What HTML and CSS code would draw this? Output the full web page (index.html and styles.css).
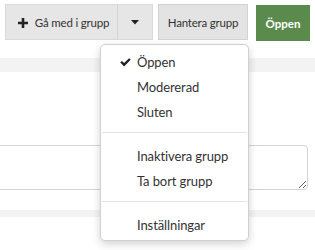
FILE: index.html
```html
<!DOCTYPE html>
<html lang="sv">
<head>
    <meta charset="UTF-8">
    <meta name="viewport" content="width=device-width, initial-scale=1.0">
    <title>Grupp</title>
    <link rel="stylesheet" href="styles.css">
</head>
<body>
    <div class="toolbar">
        <div class="btn-group">
            <button class="btn btn-join">
                <svg class="plus" width="10" height="10" viewBox="0 0 10 10"><path d="M3.7 0h2.6v3.7H10v2.6H6.3V10H3.7V6.3H0V3.7h3.7z" fill="#222"/></svg>
                Gå med i grupp
            </button>
            <button class="btn btn-caret">
                <svg width="8" height="5" viewBox="0 0 8 5"><path d="M0 0h8L4 4.5z" fill="#222"/></svg>
            </button>
        </div>
        <button class="btn btn-manage">Hantera grupp</button>
        <button class="btn btn-status">Öppen</button>
    </div>

    <div class="content">
        <div class="band"></div>
        <textarea class="note"></textarea>
        <div class="band band-low"></div>
    </div>

    <div class="dropdown">
        <ul>
            <li class="checked">
                <svg class="check" width="11" height="9" viewBox="0 0 11 9"><path d="M0.3 4.6l1.6-1.6 2.2 2.1L9.1 0.2 10.7 1.8 4.1 8.4z" fill="#222"/></svg>
                Öppen
            </li>
            <li>Modererad</li>
            <li>Sluten</li>
            <li class="divider"></li>
            <li>Inaktivera grupp</li>
            <li>Ta bort grupp</li>
            <li class="divider"></li>
            <li>Inställningar</li>
        </ul>
    </div>
</body>
</html>
```

FILE: styles.css
```css
body {
    margin: 0;
    font-family: 'Lato', 'Open Sans', sans-serif;
    color: #333;
    background: #fff;
    overflow: hidden;
}
.toolbar {
    display: flex;
    align-items: flex-start;
    padding: 4px 0 0 5px;
}
.btn-group {
    display: flex;
}
.btn {
    height: 36px;
    margin: 0;
    padding: 0;
    border: 1px solid #dadada;
    background: #e6e6e6;
    color: #333;
    font-family: inherit;
    font-size: 11.5px;
    letter-spacing: -0.2px;
    display: flex;
    align-items: center;
    justify-content: center;
}
.btn-join {
    width: 113px;
    gap: 7px;
    padding-left: 4px;
}
.plus {
    margin-top: 1px;
}
.btn-caret {
    width: 36px;
    border-left: 1px solid #d4d4d4;
    margin-left: -1px;
}
.btn-manage {
    width: 90px;
    margin-left: 5px;
    background: #e3e3e3;
    border-color: #d2d2d2;
}
.btn-status {
    width: 54px;
    margin-left: 8px;
    margin-top: 1px;
    background: #5b8b4c;
    border-color: #5b8b4c;
    color: #fff;
    font-weight: bold;
    letter-spacing: 0;
}
.content {
    display: flex;
    flex-direction: column;
    padding-top: 17px;
}
.band {
    height: 14px;
    background: #f3f3f3;
}
.band-low {
    height: 7px;
    margin-top: 20px;
}
.note {
    display: block;
    margin: 73px 0 0 -10px;
    width: 318px;
    height: 45px;
    box-sizing: border-box;
    border: 1px solid #d4d4d4;
    border-radius: 4px;
    background: #fff;
    resize: both;
}
.dropdown {
    position: absolute;
    left: 100px;
    top: 44px;
    width: 149px;
    box-sizing: border-box;
    background: #fff;
    border: 1px solid #d0d0d0;
    border-radius: 5px;
    box-shadow: 0 3px 8px rgba(0, 0, 0, 0.18);
}
.dropdown ul {
    list-style: none;
    margin: 0;
    padding: 5px 0 2px;
}
.dropdown li {
    height: 25px;
    line-height: 25px;
    padding-left: 36px;
    font-size: 13px;
    letter-spacing: -0.1px;
    color: #333;
    position: relative;
}
.dropdown li.divider {
    height: 1px;
    padding: 0;
    margin: 7px 1px 11px;
    background: #e4e4e4;
}
.check {
    position: absolute;
    left: 19px;
    top: 8px;
}
```
